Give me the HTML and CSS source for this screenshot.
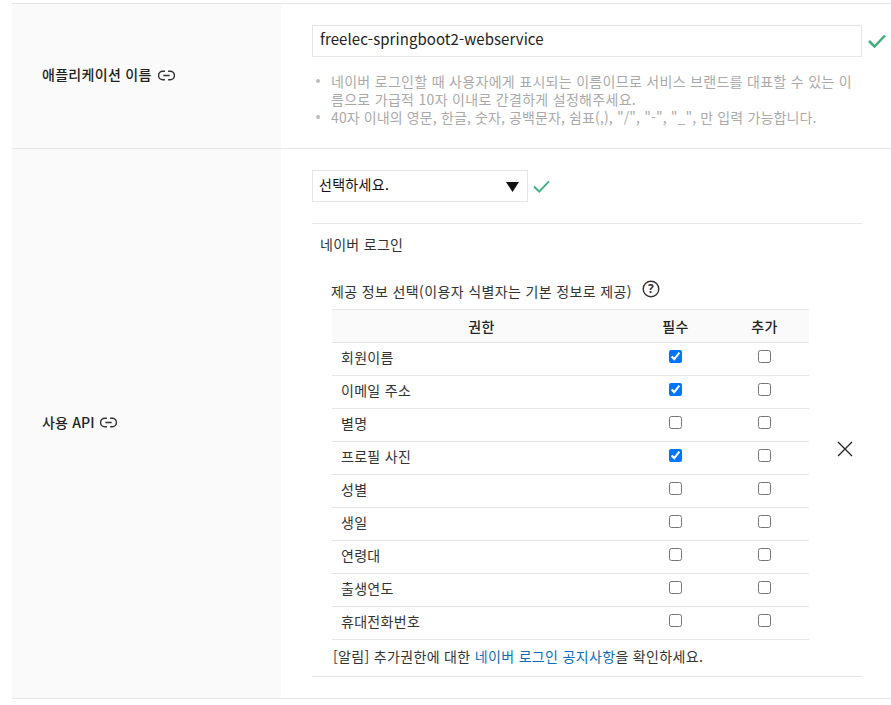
FILE: index.html
```html
<!DOCTYPE html>
<html lang="ko">
<head>
<meta charset="utf-8">
<title>애플리케이션 등록</title>
<link rel="stylesheet" href="styles.css">
</head>
<body>
<div class="form">
  <section class="row row-name">
    <div class="label">애플리케이션 이름
      <svg class="link" viewBox="0 0 16 10" width="17" height="11"><path d="M6.5 1H4.5a4 4 0 0 0 0 8h2M9.5 1h2a4 4 0 0 1 0 8h-2M5 5h6"/></svg>
    </div>
    <div class="content">
      <div class="name-line">
        <div class="field name-field">freelec-springboot2-webservice</div>
        <svg class="check check-lg" viewBox="0 0 18 14" width="18" height="14"><path d="M1 7l5.5 5.5L17 1.5"/></svg>
      </div>
      <ul class="hints">
        <li>네이버 로그인할 때 사용자에게 표시되는 이름이므로 서비스 브랜드를 대표할 수 있는 이름으로 가급적 10자 이내로 간결하게 설정해주세요.</li>
        <li class="hint-tight">40자 이내의 영문, 한글, 숫자, 공백문자, 쉼표(,), "/", "-", "_", 만 입력 가능합니다.</li>
      </ul>
    </div>
  </section>
  <section class="row row-api">
    <div class="label label-api">사용 API
      <svg class="link" viewBox="0 0 16 10" width="17" height="11"><path d="M6.5 1H4.5a4 4 0 0 0 0 8h2M9.5 1h2a4 4 0 0 1 0 8h-2M5 5h6"/></svg>
    </div>
    <div class="content">
      <div class="select-line">
        <div class="field select-field">선택하세요.<svg class="arrow" viewBox="0 0 13 10" width="13" height="10"><path d="M0 0h13L6.5 10z"/></svg></div>
        <svg class="check" viewBox="0 0 18 14" width="17" height="13"><path d="M1 7l5.5 5.5L17 1.5"/></svg>
      </div>
      <div class="api-box">
        <div class="api-body">
          <div class="api-title">네이버 로그인</div>
          <div class="info-title">제공 정보 선택(이용자 식별자는 기본 정보로 제공)
            <svg class="help" viewBox="0 0 18 18" width="18" height="18"><circle cx="9" cy="9" r="7.8"/><text x="9" y="13" text-anchor="middle">?</text></svg>
          </div>
          <table class="perm">
            <thead><tr><th>권한</th><th>필수</th><th>추가</th></tr></thead>
            <tbody>
              <tr><td>회원이름</td><td class="c"><input type="checkbox" checked></td><td class="c"><input type="checkbox"></td></tr>
              <tr><td>이메일 주소</td><td class="c"><input type="checkbox" checked></td><td class="c"><input type="checkbox"></td></tr>
              <tr><td>별명</td><td class="c"><input type="checkbox"></td><td class="c"><input type="checkbox"></td></tr>
              <tr><td>프로필 사진</td><td class="c"><input type="checkbox" checked></td><td class="c"><input type="checkbox"></td></tr>
              <tr><td>성별</td><td class="c"><input type="checkbox"></td><td class="c"><input type="checkbox"></td></tr>
              <tr><td>생일</td><td class="c"><input type="checkbox"></td><td class="c"><input type="checkbox"></td></tr>
              <tr><td>연령대</td><td class="c"><input type="checkbox"></td><td class="c"><input type="checkbox"></td></tr>
              <tr><td>출생연도</td><td class="c"><input type="checkbox"></td><td class="c"><input type="checkbox"></td></tr>
              <tr><td>휴대전화번호</td><td class="c"><input type="checkbox"></td><td class="c"><input type="checkbox"></td></tr>
            </tbody>
          </table>
          <p class="note">[알림] 추가권한에 대한 <a href="#">네이버 로그인 공지사항</a>을 확인하세요.</p>
        </div>
        <svg class="close" viewBox="0 0 16 16" width="16" height="16"><path d="M1 1l14 14M15 1L1 15"/></svg>
      </div>
    </div>
  </section>
</div>
</body>
</html>
```
FILE: styles.css
```css
* { box-sizing: border-box; }
html, body { margin: 0; padding: 0; height: 705px; overflow: hidden; background: #fff; }
body { font-family: "Noto Sans CJK KR", "Noto Sans", sans-serif; font-size: 14px; color: #333; letter-spacing: 0.3px; }
.form { padding: 3px 0 0 12px; }
.row { display: flex; border-top: 1px solid #e6e6e6; }
.row-name { height: 145px; }
.row-api { height: 551px; border-bottom: 1px solid #e6e6e6; }
.label { width: 269px; flex: none; background: #fafafa; padding: 0 0 4px 30px; display: flex; align-items: center; gap: 6px; font-weight: 500; color: #222; }
.label-api { letter-spacing: 0.15px; gap: 5px; }
.link { fill: none; stroke: #333; stroke-width: 1.4; flex: none; margin-top: 2px; }
.content { padding-left: 31px; width: 581px; flex: none; }
.name-line { display: flex; align-items: center; gap: 6px; margin-top: 21px; width: 574px; }
.field { height: 32px; border: 1px solid #e6e6e6; background: #fff; color: #222; display: flex; align-items: center; padding-left: 7px; }
.name-field { width: 550px; font-size: 15px; letter-spacing: 0.07px; padding-bottom: 5px; }
.check { fill: none; stroke: #3fae7c; stroke-width: 2; flex: none; }
.check-lg { stroke-width: 2.5; margin-top: -1px; }
.hints { margin: 15px 0 0; padding: 0 0 0 19px; width: 550px; list-style: none; color: #aaa; line-height: 18px; font-size: 14px; word-break: break-all; }
.hints li { position: relative; }
.hints .hint-tight { letter-spacing: 0.12px; }
.hints li::before { content: ""; position: absolute; left: -15px; top: 7px; width: 4px; height: 4px; border-radius: 50%; background: #bbb; }
.select-line { display: flex; align-items: center; gap: 5px; margin-top: 21px; }
.select-field { width: 216px; justify-content: space-between; padding: 0 8px 4px 6px; color: #111; }
.arrow { fill: #111; flex: none; margin-top: 5px; }
.api-box { display: flex; align-items: center; width: 550px; margin-top: 21px; border-top: 1px solid #e6e6e6; border-bottom: 1px solid #e6e6e6; height: 454px; position: relative; }
.api-body { width: 497px; padding: 10px 0 0 8px; flex: none; height: 100%; }
.api-title { height: 20px; line-height: 20px; color: #333; }
.info-title { margin-top: 27px; padding-left: 11px; height: 20px; line-height: 20px; display: flex; align-items: center; gap: 10px; letter-spacing: 0.37px; }
.help { fill: none; stroke: #333; stroke-width: 1.4; flex: none; margin-top: -5px; }
.help text { font-size: 12px; font-weight: 700; fill: #333; stroke: none; font-family: "Noto Sans", sans-serif; }
.perm { margin: 8px 0 0 12px; width: 477px; border-collapse: collapse; table-layout: fixed; }
.perm th, .perm td { border-bottom: 1px solid #e6e6e6; height: 33px; padding: 0; font-size: 14px; }
.perm th { background: #fafafa; font-weight: 500; border-top: 1px solid #e6e6e6; color: #222; padding-bottom: 1px; }
.perm th:first-child { width: 299px; }
.perm th:nth-child(2) { width: 89px; }
.perm td:first-child { padding: 0 0 4px 9px; }
.perm .c { text-align: center; }
.perm input { margin: 0; width: 13px; height: 13px; vertical-align: 2px; }
.note { margin: 6px 0 0 13px; line-height: 20px; color: #333; letter-spacing: 0.33px; }
.note a { color: #0a6ebd; text-decoration: none; }
.close { fill: none; stroke: #222; stroke-width: 1.3; flex: none; margin-left: 28px; margin-top: -2px; }
```
